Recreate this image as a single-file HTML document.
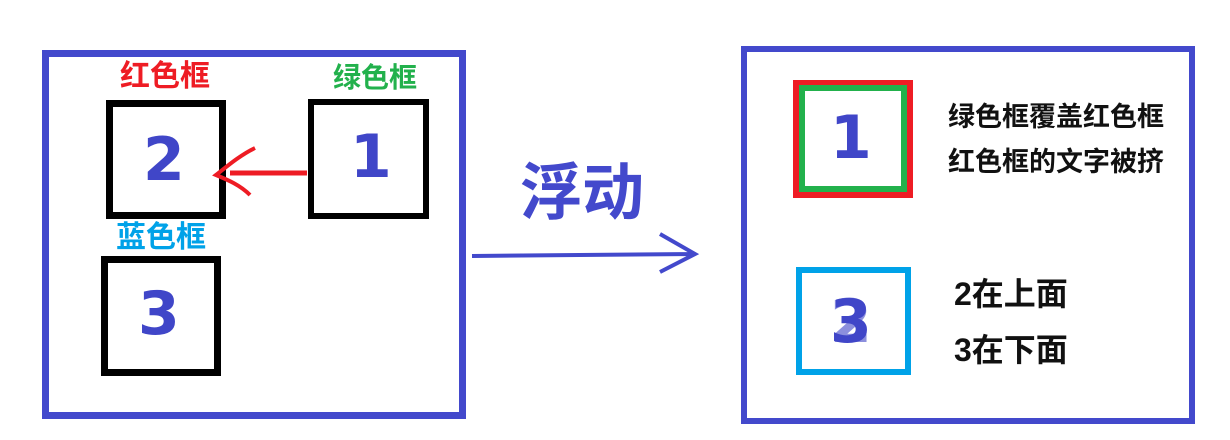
<!DOCTYPE html>
<html><head><meta charset="utf-8"><style>
body{margin:0;width:1230px;height:440px;background:#fff;position:relative;overflow:hidden;font-family:"Liberation Sans","Noto Sans CJK SC",sans-serif;font-weight:bold}
.a{position:absolute;box-sizing:border-box}
.t{position:absolute;white-space:nowrap;line-height:1}
.n{position:absolute;color:#4046c8;font-size:60px;line-height:1;font-family:"DejaVu Sans",sans-serif;font-weight:bold}
</style></head><body>
<div class="a" style="left:42px;top:50px;width:424px;height:369px;border:7px solid #4349cc"></div>
<div class="a" style="left:741px;top:46px;width:454px;height:378px;border:6px solid #4349cc"></div>

<div class="t" style="left:120px;top:62px;font-size:30px;color:#ee1c24">红色框</div>
<div class="t" style="left:333px;top:64px;font-size:28px;color:#22b14c">绿色框</div>
<div class="t" style="left:116px;top:223px;font-size:30px;color:#00a2e8">蓝色框</div>

<div class="a" style="left:106px;top:100px;width:120px;height:119px;border:7px solid #000"></div>
<div class="a" style="left:308px;top:99px;width:121px;height:120px;border:6px solid #000"></div>
<div class="a" style="left:101px;top:256px;width:120px;height:120px;border:7px solid #000"></div>
<div class="n" style="left:143px;top:130px">2</div>
<div class="n" style="left:350px;top:127px">1</div>
<div class="n" style="left:138px;top:284px">3</div>

<svg class="a" style="left:0;top:0" width="1230" height="440">
<path d="M307 173 L230 173" stroke="#ee1c24" stroke-width="5" fill="none"/>
<path d="M255 148 C240 155 225 168 216 175 C228 180 240 185 250 195" stroke="#ee1c24" stroke-width="4" fill="none"/>
<path d="M472 256 L695 254 M660 234 L695 254 L660 272" stroke="#4349cc" stroke-width="4" fill="none"/>
</svg>
<div class="t" style="left:520px;top:163px;font-size:62px;color:#4349cc">浮动</div>

<div class="a" style="left:793px;top:80px;width:120px;height:118px;border:6px solid #ee1c24"></div>
<div class="a" style="left:799px;top:85px;width:108px;height:107px;border:6px solid #22b14c"></div>
<div class="n" style="left:830px;top:108px">1</div>
<div class="a" style="left:796px;top:267px;width:115px;height:108px;border:6px solid #00a2e8"></div>
<div class="n" style="left:830px;top:292px">3</div>
<div class="n" style="left:830px;top:292px;opacity:.6">2</div>

<div class="t" style="left:948px;top:104px;font-size:27px;color:#111">绿色框覆盖红色框</div>
<div class="t" style="left:948px;top:149px;font-size:27px;color:#111">红色框的文字被挤</div>
<div class="t" style="left:954px;top:278px;font-size:32px;color:#111">2在上面</div>
<div class="t" style="left:954px;top:334px;font-size:32px;color:#111">3在下面</div>
</body></html>
